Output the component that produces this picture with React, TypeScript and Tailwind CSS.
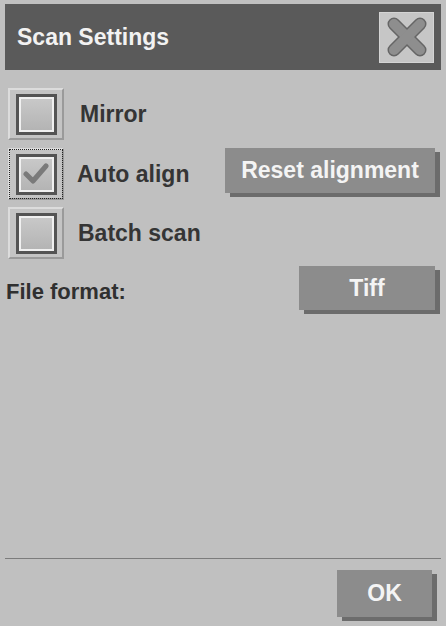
import React from "react";

function CheckBox({ checked, focused }: { checked?: boolean; focused?: boolean }) {
  return (
    <div
      className={
        "w-[56px] h-[52px] shrink-0 flex items-center justify-center " +
        (focused ? "outline outline-1 outline-dotted outline-[#222] -outline-offset-2 " : "") +
        "bg-[#c4c4c4] border-t-2 border-l-2 border-t-[#dcdcdc] border-l-[#dcdcdc] border-b-2 border-r-2 border-b-[#9a9a9a] border-r-[#9a9a9a]"
      }
    >
      <div className="w-[41px] h-[41px] border-[3px] border-[#545454] bg-[#b8b8b8] flex items-center justify-center">
        <div className="w-full h-full border-2 border-[#f0f0f0] bg-gradient-to-b from-[#c8c8c8] to-[#b4b4b4] flex items-center justify-center">
          {checked && (
            <svg width="26" height="22" viewBox="0 0 26 22">
              <path d="M3 11 L10 18 L23 3" fill="none" stroke="#7a7a7a" strokeWidth="5" strokeLinecap="round" strokeLinejoin="round" />
            </svg>
          )}
        </div>
      </div>
    </div>
  );
}

function Btn({ label, w, h }: { label: string; w: string; h: string }) {
  return (
    <button
      className={
        w + " " + h + " bg-[#8c8c8c] shadow-[5px_4px_0_#6c6c6c] text-[#f4f4f4] text-[23px] font-bold flex items-center justify-center shrink-0"
      }
    >
      {label}
    </button>
  );
}

export default function App() {
  return (
    <div className="w-[446px] h-[626px] bg-[#c0c0c0] flex flex-col overflow-hidden font-['Liberation_Sans',Arial,sans-serif]">
      <header className="mx-[5px] mt-[4px] h-[66px] bg-[#5a5a5a] flex items-center justify-between pl-[12px] pr-[7px]">
        <h1 className="text-[23px] font-bold text-[#f2f2f2] leading-none">Scan Settings</h1>
        <button className="w-[55px] h-[51px] bg-[#c6c6c6] border border-[#d4d4d4] flex items-center justify-center">
          <svg width="40" height="40" viewBox="0 0 40 40">
            <g strokeLinecap="round">
              <line x1="7" y1="7" x2="33" y2="33" stroke="#656565" strokeWidth="13" />
              <line x1="33" y1="7" x2="7" y2="33" stroke="#656565" strokeWidth="13" />
              <line x1="7" y1="7" x2="33" y2="33" stroke="#8e8e8e" strokeWidth="10" />
              <line x1="33" y1="7" x2="7" y2="33" stroke="#8e8e8e" strokeWidth="10" />
            </g>
          </svg>
        </button>
      </header>

      <div className="flex flex-col pl-[8px] pr-[11px]">
        <div className="mt-[18px] h-[52px] flex items-center">
          <CheckBox />
          <span className="ml-[16px] text-[23px] font-bold text-[#353535]">Mirror</span>
        </div>
        <div className="mt-[8px] h-[52px] flex items-start">
          <div className="flex items-center h-[52px]">
            <CheckBox checked focused />
            <span className="ml-[13px] text-[23px] font-bold text-[#353535]">Auto align</span>
          </div>
          <div className="ml-auto">
            <Btn label="Reset alignment" w="w-[210px]" h="h-[45px]" />
          </div>
        </div>
        <div className="mt-[7px] h-[52px] flex items-center">
          <CheckBox />
          <span className="ml-[14px] text-[23px] font-bold text-[#353535]">Batch scan</span>
        </div>
      </div>

      <div className="mt-[7px] flex items-center pl-[6px] pr-[11px]">
        <span className="text-[22px] font-bold text-[#303030] mt-[6px]">File format:</span>
        <div className="ml-auto">
          <Btn label="Tiff" w="w-[136px]" h="h-[44px]" />
        </div>
      </div>

      <div className="mt-auto mx-[5px] h-[1px] bg-[#7c7c7c]" />
      <div className="mt-[11px] mb-[9px] flex justify-end pr-[14px]">
        <Btn label="OK" w="w-[95px]" h="h-[47px]" />
      </div>
    </div>
  );
}
